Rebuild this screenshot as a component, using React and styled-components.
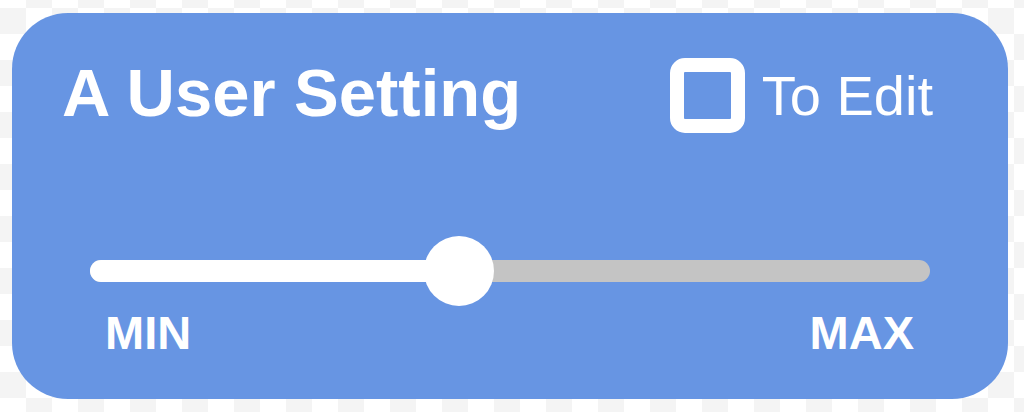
import React, { useState } from "react";
import styled, { createGlobalStyle } from "styled-components";

const GlobalStyle = createGlobalStyle`
  html, body {
    margin: 0;
    padding: 0;
    width: 1024px;
    height: 412px;
    overflow: hidden;
    background-color: #ffffff;
    background-image: repeating-conic-gradient(#f4f4f4 0 25%, #ffffff 0 50%);
    background-size: 52px 52px;
    background-position: 0 34px;
    font-family: "Liberation Sans", Arial, sans-serif;
  }
`;

const Page = styled.div`
  padding: 13px 16px 13px 12px;
`;

const Card = styled.div`
  box-sizing: border-box;
  width: 996px;
  height: 386px;
  border-radius: 56px;
  background: #6795e3;
  padding: 45px 0 0 0;
  display: flex;
  flex-direction: column;
`;

const Header = styled.div`
  display: flex;
  justify-content: space-between;
  align-items: center;
  padding: 0 75px 0 50px;
  height: 75px;
`;

const Title = styled.h1`
  margin: 0 0 6px 0;
  font-size: 67px;
  line-height: 1;
  font-weight: 700;
  color: #ffffff;
`;

const EditToggle = styled.label`
  display: flex;
  align-items: center;
  gap: 17px;
  cursor: pointer;
  color: #ffffff;
  font-size: 56px;
  line-height: 1;
`;

const Box = styled.span`
  box-sizing: border-box;
  width: 75px;
  height: 75px;
  border: 14px solid #ffffff;
  border-radius: 15px;
  background: ${(p) => (p.checked ? "#ffffff" : "transparent")};
`;

const HiddenInput = styled.input`
  display: none;
`;

const SliderWrap = styled.div`
  margin-top: 103px;
  padding: 0 78px;
`;

const Track = styled.div`
  position: relative;
  height: 70px;
  display: flex;
  align-items: center;
`;

const Rail = styled.div`
  width: 100%;
  height: 22px;
  border-radius: 11px;
  background: #c4c4c4;
  overflow: hidden;
`;

const Fill = styled.div`
  height: 100%;
  background: #ffffff;
`;

const Thumb = styled.div`
  position: absolute;
  top: 0;
  width: 70px;
  height: 70px;
  margin-left: -35px;
  border-radius: 50%;
  background: #ffffff;
`;

const Labels = styled.div`
  display: flex;
  justify-content: space-between;
  margin-top: 3px;
  padding: 0 94px 0 93px;
`;

const Label = styled.span`
  font-size: 47px;
  line-height: 1;
  font-weight: 700;
  color: #ffffff;
`;

export default function App() {
  const [editing, setEditing] = useState(false);
  const value = 43.9;

  return (
    <Page>
      <GlobalStyle />
      <Card>
        <Header>
          <Title>A User Setting</Title>
          <EditToggle>
            <HiddenInput
              type="checkbox"
              checked={editing}
              onChange={() => setEditing(!editing)}
            />
            <Box checked={editing} />
            To Edit
          </EditToggle>
        </Header>
        <SliderWrap>
          <Track>
            <Rail>
              <Fill style={{ width: value + "%" }} />
            </Rail>
            <Thumb style={{ left: value + "%" }} />
          </Track>
        </SliderWrap>
        <Labels>
          <Label>MIN</Label>
          <Label>MAX</Label>
        </Labels>
      </Card>
    </Page>
  );
}
